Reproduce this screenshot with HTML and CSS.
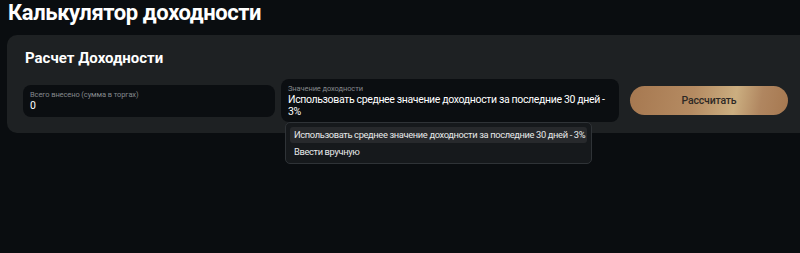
FILE: index.html
```html
<!DOCTYPE html>
<html lang="ru">
<head>
<meta charset="utf-8">
<link rel="stylesheet" href="styles.css">
</head>
<body>
<h1 class="page-title">Калькулятор доходности</h1>
<section class="card">
  <h2 class="card-title">Расчет Доходности</h2>
  <div class="row">
    <div class="field field-sum">
      <div class="field-label">Всего внесено (сумма в торгах)</div>
      <div class="field-value">0</div>
    </div>
    <div class="field field-yield">
      <div class="field-label">Значение доходности</div>
      <div class="field-value">Использовать среднее значение доходности за последние 30 дней - 3%</div>
      <ul class="menu">
        <li class="menu-item active">Использовать среднее значение доходности за последние 30 дней - 3%</li>
        <li class="menu-item">Ввести вручную</li>
      </ul>
    </div>
    <button class="btn">Рассчитать</button>
  </div>
</section>
</body>
</html>
```

FILE: styles.css
```css
html, body {
  margin: 0;
  padding: 0;
  background: #0a0d10;
  overflow: hidden;
}
body {
  font-family: Roboto, "Noto Sans", "Liberation Sans", sans-serif;
  color: #ffffff;
  width: 800px;
  height: 253px;
}
.page-title {
  margin: 0;
  padding: 0 0 0 8px;
  font-size: 22px;
  line-height: 26px;
  font-weight: 700;
  letter-spacing: -0.4px;
}
.card {
  margin: 9px 0 0 7px;
  background: #1e2123;
  border-radius: 10px 0 0 10px;
  padding: 14px 0 11px 16px;
}
.card-title {
  margin: 0 0 12px 2px;
  font-size: 15px;
  line-height: 18px;
  font-weight: 700;
}
.row {
  display: flex;
  align-items: center;
}
.field {
  background: #0b0e11;
  border-radius: 8px;
  box-sizing: border-box;
}
.field-sum {
  width: 252px;
  padding: 5px 7px;
}
.field-yield {
  position: relative;
  width: 338px;
  margin-left: 6px;
  padding: 5px 7px 4px;
}
.field-label {
  font-size: 7.5px;
  line-height: 10px;
  color: #85898d;
  letter-spacing: -0.1px;
}
.field-value {
  font-size: 10.5px;
  line-height: 12px;
  color: #ffffff;
  letter-spacing: -0.35px;
}
.menu {
  position: absolute;
  left: 4px;
  top: 100%;
  width: 307px;
  margin: 0;
  padding: 4px 4px 3px;
  list-style: none;
  background: #16191c;
  border: 1px solid #2f3337;
  border-radius: 5px;
  box-sizing: border-box;
}
.menu-item {
  font-size: 9.3px;
  line-height: 16px;
  padding: 0 4px;
  border-radius: 3px;
  color: #e8e9ea;
  white-space: nowrap;
  letter-spacing: -0.35px;
}
.menu-item + .menu-item {
  line-height: 17px;
}
.menu-item.active {
  background: #27292c;
}
.btn {
  margin-left: 11px;
  width: 158px;
  height: 29px;
  border: 0;
  border-radius: 15px;
  background: linear-gradient(100deg, #a67850 0%, #b58b62 40%, #cbae80 66%, #b08660 82%, #a67850 100%);
  color: #2d2925;
  font-family: Roboto, "Noto Sans", "Liberation Sans", sans-serif;
  font-size: 10.5px;
  font-weight: 500;
  letter-spacing: -0.2px;
  padding: 0;
}
```
